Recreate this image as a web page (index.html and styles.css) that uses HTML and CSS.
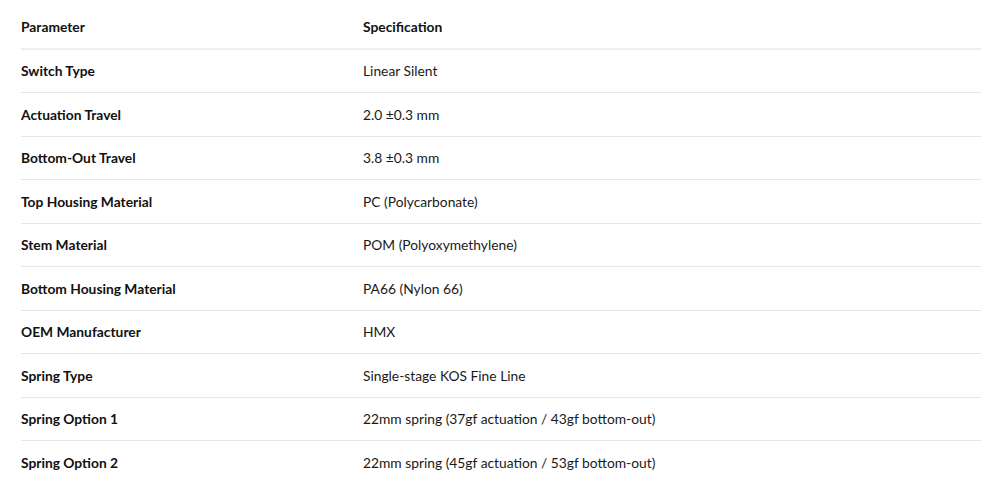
FILE: index.html
```html
<!DOCTYPE html>
<html>
<head>
<meta charset="utf-8">
<link rel="stylesheet" href="styles.css">
</head>
<body>
<table class="spec">
  <thead>
    <tr><th class="col-param">Parameter</th><th>Specification</th></tr>
  </thead>
  <tbody>
    <tr><td class="col-param">Switch Type</td><td>Linear Silent</td></tr>
    <tr><td class="col-param">Actuation Travel</td><td>2.0 ±0.3 mm</td></tr>
    <tr><td class="col-param">Bottom-Out Travel</td><td>3.8 ±0.3 mm</td></tr>
    <tr><td class="col-param">Top Housing Material</td><td>PC (Polycarbonate)</td></tr>
    <tr><td class="col-param">Stem Material</td><td>POM (Polyoxymethylene)</td></tr>
    <tr><td class="col-param">Bottom Housing Material</td><td>PA66 (Nylon 66)</td></tr>
    <tr><td class="col-param">OEM Manufacturer</td><td>HMX</td></tr>
    <tr><td class="col-param">Spring Type</td><td>Single-stage KOS Fine Line</td></tr>
    <tr><td class="col-param">Spring Option 1</td><td>22mm spring (37gf actuation / 43gf bottom-out)</td></tr>
    <tr><td class="col-param">Spring Option 2</td><td>22mm spring (45gf actuation / 53gf bottom-out)</td></tr>
  </tbody>
</table>
</body>
</html>
```
FILE: styles.css
```css
html, body {
  margin: 0;
  padding: 0;
  background: #ffffff;
}
body {
  padding: 5px 4px 0 21px;
  font-family: "Lato", "Open Sans", sans-serif;
  font-size: 13.8px;
  color: #1a1a1a;
}
.spec {
  width: 960px;
  border-collapse: collapse;
  table-layout: fixed;
}
.spec th, .spec td {
  text-align: left;
  line-height: 19.5px;
  vertical-align: middle;
}
.spec th {
  font-weight: 700;
  color: #111111;
  border-bottom: 2px solid #eeeeee;
  padding: 12px 0 11px;
}
.spec td {
  border-bottom: 1px solid #e6e6e6;
  padding: 11.5px 0 11.5px;
}
.spec tbody tr:last-child td {
  border-bottom: none;
}
.spec .col-param {
  width: 342px;
}
.spec td.col-param {
  font-weight: 700;
  color: #111111;
}
```
